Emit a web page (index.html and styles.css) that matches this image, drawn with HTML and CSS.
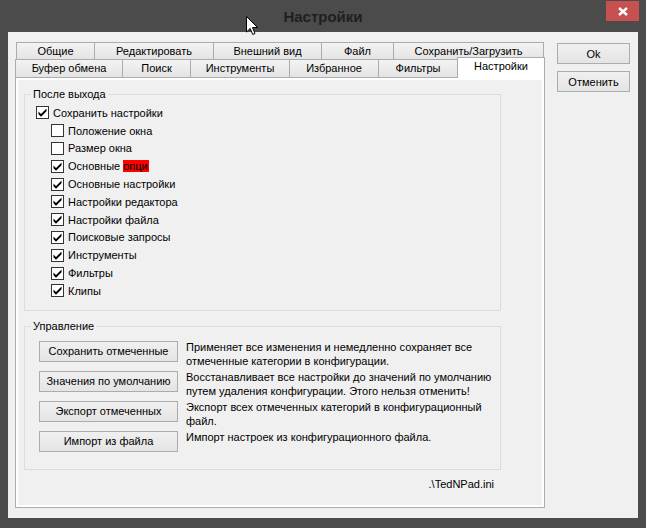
FILE: index.html
```html
<!DOCTYPE html>
<html lang="ru">
<head>
    <meta charset="UTF-8">
    <title>Настройки</title>
    <link rel="stylesheet" href="styles.css">
</head>
<body>
    <div class="window">
        <div class="titlebar">
            <span class="title">Настройки</span>
            <button class="close" type="button">
                <svg width="10" height="9" viewBox="0 0 10 9"><path d="M1 1 L9 8 M9 1 L1 8" stroke="#fff" stroke-width="2.4"/></svg>
            </button>
        </div>

        <div class="client">
            <div class="tabs">
                <div class="tab-row tab-row--back">
                    <div class="tab">Общие</div>
                    <div class="tab">Редактировать</div>
                    <div class="tab">Внешний вид</div>
                    <div class="tab">Файл</div>
                    <div class="tab">Сохранить/Загрузить</div>
                </div>
                <div class="tab-row tab-row--front">
                    <div class="tab">Буфер обмена</div>
                    <div class="tab">Поиск</div>
                    <div class="tab">Инструменты</div>
                    <div class="tab">Избранное</div>
                    <div class="tab">Фильтры</div>
                    <div class="tab tab--active">Настройки</div>
                </div>

                <div class="page">
                    <div class="group group--exit">
                        <span class="group-title">После выхода</span>
                        <label class="check-row"><span class="box"><svg width="11" height="11" viewBox="0 0 11 11"><path d="M1.5 4.5 L4 7 L9.5 1.5 L9.5 4.3 L4 9.8 L1.5 7.3 Z"/></svg></span><span>Сохранить настройки</span></label>
                        <label class="check-row check-row--sub"><span class="box"></span><span>Положение окна</span></label>
                        <label class="check-row check-row--sub"><span class="box"></span><span>Размер окна</span></label>
                        <label class="check-row check-row--sub"><span class="box"><svg width="11" height="11" viewBox="0 0 11 11"><path d="M1.5 4.5 L4 7 L9.5 1.5 L9.5 4.3 L4 9.8 L1.5 7.3 Z"/></svg></span><span>Основные <span class="mark">опци</span></span></label>
                        <label class="check-row check-row--sub"><span class="box"><svg width="11" height="11" viewBox="0 0 11 11"><path d="M1.5 4.5 L4 7 L9.5 1.5 L9.5 4.3 L4 9.8 L1.5 7.3 Z"/></svg></span><span>Основные настройки</span></label>
                        <label class="check-row check-row--sub"><span class="box"><svg width="11" height="11" viewBox="0 0 11 11"><path d="M1.5 4.5 L4 7 L9.5 1.5 L9.5 4.3 L4 9.8 L1.5 7.3 Z"/></svg></span><span>Настройки редактора</span></label>
                        <label class="check-row check-row--sub"><span class="box"><svg width="11" height="11" viewBox="0 0 11 11"><path d="M1.5 4.5 L4 7 L9.5 1.5 L9.5 4.3 L4 9.8 L1.5 7.3 Z"/></svg></span><span>Настройки файла</span></label>
                        <label class="check-row check-row--sub"><span class="box"><svg width="11" height="11" viewBox="0 0 11 11"><path d="M1.5 4.5 L4 7 L9.5 1.5 L9.5 4.3 L4 9.8 L1.5 7.3 Z"/></svg></span><span>Поисковые запросы</span></label>
                        <label class="check-row check-row--sub"><span class="box"><svg width="11" height="11" viewBox="0 0 11 11"><path d="M1.5 4.5 L4 7 L9.5 1.5 L9.5 4.3 L4 9.8 L1.5 7.3 Z"/></svg></span><span>Инструменты</span></label>
                        <label class="check-row check-row--sub"><span class="box"><svg width="11" height="11" viewBox="0 0 11 11"><path d="M1.5 4.5 L4 7 L9.5 1.5 L9.5 4.3 L4 9.8 L1.5 7.3 Z"/></svg></span><span>Фильтры</span></label>
                        <label class="check-row check-row--sub"><span class="box"><svg width="11" height="11" viewBox="0 0 11 11"><path d="M1.5 4.5 L4 7 L9.5 1.5 L9.5 4.3 L4 9.8 L1.5 7.3 Z"/></svg></span><span>Клипы</span></label>
                    </div>

                    <div class="group group--manage">
                        <span class="group-title">Управление</span>
                        <div class="action-row">
                            <button class="btn btn--action" type="button">Сохранить отмеченные</button>
                            <div class="action-desc">Применяет все изменения и немедленно сохраняет все<br>отмеченные категории в конфигурации.</div>
                        </div>
                        <div class="action-row">
                            <button class="btn btn--action" type="button">Значения по умолчанию</button>
                            <div class="action-desc">Восстанавливает все настройки до значений по умолчанию<br>путем удаления конфигурации. Этого нельзя отменить!</div>
                        </div>
                        <div class="action-row">
                            <button class="btn btn--action" type="button">Экспорт отмеченных</button>
                            <div class="action-desc">Экспорт всех отмеченных категорий в конфигурационный<br>файл.</div>
                        </div>
                        <div class="action-row">
                            <button class="btn btn--action" type="button">Импорт из файла</button>
                            <div class="action-desc">Импорт настроек из конфигурационного файла.</div>
                        </div>
                    </div>

                    <div class="config-path">.\TedNPad.ini</div>
                </div>
            </div>

            <div class="side">
                <button class="btn btn--side" type="button">Ok</button>
                <button class="btn btn--side" type="button">Отменить</button>
            </div>
        </div>

        <svg class="cursor" width="13" height="20" viewBox="0 0 13 20"><path d="M0.5 0.5 L0.5 16 L4.2 12.4 L6.7 18.5 L9 17.5 L6.5 11.5 L11.5 11.5 Z" fill="#fff" stroke="#000" stroke-width="1"/></svg>
    </div>
</body>
</html>
```

FILE: styles.css
```css
* {
    box-sizing: border-box;
}

body {
    margin: 0;
    background-color: #4b4b4b;
    font-family: "Liberation Sans", Arial, sans-serif;
    font-size: 11px;
    color: #000;
}

.window {
    position: relative;
    width: 646px;
    height: 528px;
    padding: 0 8px;
}

.titlebar {
    height: 32px;
    display: flex;
    align-items: center;
    justify-content: center;
}

.title {
    font-size: 15px;
    font-weight: bold;
    color: #1f1f1f;
    margin-top: 1px;
}

.close {
    position: absolute;
    top: 1px;
    right: 7px;
    width: 33px;
    height: 20px;
    padding: 0;
    border: 0;
    background-color: #c75050;
    display: flex;
    align-items: center;
    justify-content: center;
}

.client {
    height: 486px;
    background-color: #f0f0f0;
    display: flex;
    gap: 12px;
    padding: 10px 8px 0 7px;
}

/* вкладки */
.tabs {
    width: 530px;
    display: flex;
    flex-direction: column;
}

.tab-row {
    display: flex;
    height: 17px;
}

.tab-row--back {
    padding-left: 1px;
}

.tab-row--front {
    height: 18px;
}

.tab {
    border: 1px solid #acacac;
    border-bottom: 0;
    margin-left: -1px;
    background: linear-gradient(#f3f3f3, #e4e4e4);
    display: flex;
    align-items: center;
    justify-content: center;
    line-height: 13px;
    white-space: nowrap;
}

.tab:first-child {
    margin-left: 0;
}

.tab-row--back .tab:nth-child(1) { width: 79px; }
.tab-row--back .tab:nth-child(2) { width: 120px; }
.tab-row--back .tab:nth-child(3) { width: 109px; }
.tab-row--back .tab:nth-child(4) { width: 73px; }
.tab-row--back .tab:nth-child(5) { width: 151px; }

.tab-row--front .tab:nth-child(1) { width: 108px; }
.tab-row--front .tab:nth-child(2) { width: 69px; }
.tab-row--front .tab:nth-child(3) { width: 100px; }
.tab-row--front .tab:nth-child(4) { width: 90px; }
.tab-row--front .tab:nth-child(5) { width: 80px; }

.tab--active {
    position: relative;
    z-index: 1;
    width: 88px;
    height: 21px;
    margin-top: -2px;
    padding-bottom: 3px;
    background: #fff;
}

.page {
    height: 431px;
    border: 1px solid #acacac;
    background-color: #f0f0f0;
    box-shadow: inset 0 0 0 2px #fff;
    padding: 16px 0 0 8px;
}

/* групповые рамки */
.group {
    position: relative;
    width: 477px;
    border: 1px solid #dcdcdc;
}

.group-title {
    position: absolute;
    top: -8px;
    left: 6px;
    padding: 0 2px;
    line-height: 14px;
    background-color: #f0f0f0;
}

.group--exit {
    padding: 9px 0 10px 11px;
}

.group--manage {
    margin-top: 15px;
    padding: 13px 0 11px 14px;
    display: flex;
    flex-direction: column;
    gap: 2px;
}

.check-row {
    display: flex;
    align-items: center;
    gap: 4px;
    height: 17.8px;
    white-space: nowrap;
}

.check-row--sub {
    padding-left: 15px;
}

.box {
    width: 13px;
    height: 13px;
    border: 1px solid #333;
    background-color: #fff;
    display: flex;
    align-items: center;
    justify-content: center;
}

.mark {
    background-color: #f00;
    line-height: 12px;
    display: inline-block;
    padding-right: 1px;
}

.action-row {
    display: flex;
    align-items: flex-start;
    gap: 8px;
    height: 28px;
}

.action-desc {
    line-height: 14px;
    white-space: nowrap;
}

.btn {
    height: 21px;
    padding: 0;
    border: 1px solid #acacac;
    background: linear-gradient(#f0f0f0, #e4e4e4);
    font: inherit;
    color: #000;
}

.btn--action {
    width: 139px;
    margin-top: 1px;
}

.config-path {
    width: 477px;
    margin-top: 7px;
    padding-right: 7px;
    line-height: 14px;
    text-align: right;
}

.side {
    width: 73px;
    display: flex;
    flex-direction: column;
    gap: 7px;
    padding-top: 1px;
}

.btn--side {
    width: 73px;
}

.cursor {
    position: absolute;
    left: 246px;
    top: 16px;
}
```
